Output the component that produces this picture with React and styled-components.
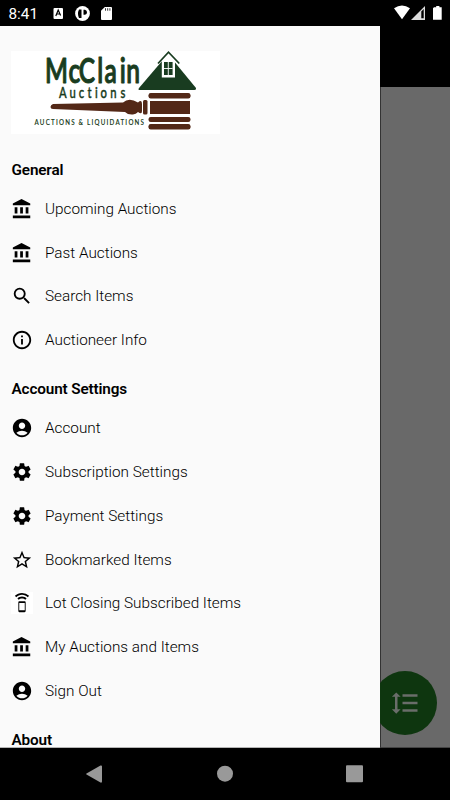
import React from "react";
import styled, { createGlobalStyle } from "styled-components";
import {
  MdAccountCircle,
  MdFormatLineSpacing,
  MdInfoOutline,
  MdSearch,
  MdSettings,
  MdSpeakerPhone,
  MdStarBorder,
} from "react-icons/md";

const GlobalStyle = createGlobalStyle`
  * {
    box-sizing: border-box;
  }
  body {
    margin: 0;
    background: #000;
    font-family: Roboto, "Liberation Sans", sans-serif;
  }
`;

const Phone = styled.div`
  width: 450px;
  height: 800px;
  display: flex;
  flex-direction: column;
  overflow: hidden;
  background: #000;
`;

const StatusBar = styled.header`
  height: 26px;
  flex: none;
  display: flex;
  justify-content: space-between;
  color: #fff;
`;

const StatusGroup = styled.div`
  display: flex;
  align-items: center;
`;

const Clock = styled.span`
  width: 44px;
  padding: 1px 0 0 8.5px;
  font-size: 15.3px;
  line-height: 26px;
  white-space: nowrap;
`;

const Body = styled.div`
  height: 722px;
  flex: none;
  display: flex;
`;

const Drawer = styled.nav`
  width: 380px;
  flex: none;
  padding: 25px 11px 0;
  overflow: hidden;
  background: #fafafa;
  border-bottom: 1px solid #b4b4b4;
  position: relative;
  z-index: 1;
`;

const Logo = styled.svg`
  display: block;
  width: 209px;
  height: 83px;
  margin-bottom: 8.7px;
  overflow: visible;
`;

const SectionTitle = styled.h2`
  height: 44.1px;
  margin: 0;
  padding: 11.5px 0 0 0.5px;
  font-size: 15.3px;
  font-weight: 600;
  line-height: 32px;
  letter-spacing: -0.14px;
  color: #000;
`;

const MenuList = styled.ul`
  list-style: none;
  margin: 0;
  padding: 0;
`;

const MenuItem = styled.li`
  height: 43.8px;
  padding-top: 0.4px;
  display: flex;
  align-items: center;
  gap: 12px;
  font-size: 15.3px;
  font-weight: 300;
  line-height: 20px;
  color: #000;
`;

const IconBox = styled.span`
  width: 22px;
  height: 22px;
  display: flex;
  font-size: 22px;
  background: ${(props) => (props.$white ? "#fff" : "transparent")};
`;

const Backdrop = styled.main`
  flex: 1;
  display: flex;
  flex-direction: column;
  justify-content: space-between;
  background: #696969;
  border-left: 1px solid #333;
  border-bottom: 1px solid #444;
`;

const Toolbar = styled.div`
  height: 61px;
  margin-left: -1px;
  background: #000;
`;

const Fab = styled.button`
  width: 64px;
  height: 64px;
  margin: 0 0 12px -8px;
  padding: 0;
  border: 0;
  border-radius: 50%;
  display: flex;
  align-items: center;
  justify-content: center;
  font-size: 30px;
  color: #6a6d6a;
  background: #0e360f;
`;

const NavBar = styled.footer`
  height: 52px;
  flex: none;
  display: flex;
  justify-content: space-between;
  align-items: center;
  padding: 0 86px 0 85px;
`;

const BankIcon = () => (
  <svg width="1em" height="1em" viewBox="0 0 24 24" fill="currentColor">
    <path d="M4 10v7h3v-7H4zm6 0v7h3v-7h-3zM2 22h19v-3H2v3zm14-12v7h3v-7h-3zM11.5 1L2 6v2h19V6l-9.5-5z" />
  </svg>
);

const sections = [
  {
    title: "General",
    items: [
      { label: "Upcoming Auctions", icon: BankIcon },
      { label: "Past Auctions", icon: BankIcon },
      { label: "Search Items", icon: MdSearch },
      { label: "Auctioneer Info", icon: MdInfoOutline },
    ],
  },
  {
    title: "Account Settings",
    items: [
      { label: "Account", icon: MdAccountCircle },
      { label: "Subscription Settings", icon: MdSettings },
      { label: "Payment Settings", icon: MdSettings },
      { label: "Bookmarked Items", icon: MdStarBorder },
      { label: "Lot Closing Subscribed Items", icon: MdSpeakerPhone, white: true },
      { label: "My Auctions and Items", icon: BankIcon },
      { label: "Sign Out", icon: MdAccountCircle },
    ],
  },
  { title: "About", items: [] },
];

const LogoImage = () => (
  <Logo viewBox="0 0 209 83">
    <rect width="209" height="83" fill="#fff" />
    <g
      fill="#193c20"
      stroke="#193c20"
      strokeLinejoin="round"
      fontFamily="Lato, sans-serif"
    >
      <text transform="translate(34 32) scale(0.72 1)" fontSize="34" fontWeight="600" strokeWidth="1" x="0 32.5 47 72.5 82.5 104 113">
        McClain
      </text>
      <text transform="translate(48 47) scale(0.75 1)" fontSize="15" fontWeight="500" strokeWidth="0.4" x="0 14 26.5 38 48 55.500 68.500 82">
        Auctions
      </text>
      <text transform="translate(23.5 74) scale(0.75 1)" fontSize="8.3" fontWeight="600" strokeWidth="0.1" textLength="146">
        AUCTIONS &amp; LIQUIDATIONS
      </text>
    </g>
    {/* house roof and dormer */}
    <path d="M157 3L185 37Q185.5 39 183.5 39H129Q126.5 39 128 37Z" fill="#193c20" />
    <path d="M150.8 26.5V10L147 11.5 157.5 1 168 11.5 164 10v16.5z" fill="#fff" />
    <path d="M147 12.5L157.5 1.2 168.3 12.5" fill="none" stroke="#193c20" strokeWidth="1.7" />
    <path d="M153 11h8.6v13H153z" fill="#193c20" />
    <path d="M157.3 11v13M153 17.5h8.6" stroke="#fff" strokeWidth="0.9" />
    {/* gavel */}
    <g fill="#532817">
      <rect x="137.5" y="42" width="42" height="5.5" rx="2.2" />
      <rect x="139" y="50" width="40" height="13" />
      <rect x="137.5" y="66" width="42" height="5" rx="2.2" />
      <rect x="137.5" y="73" width="42" height="5.5" rx="2.2" />
      <rect x="132" y="49" width="4.5" height="14.5" rx="1.5" />
      <path d="M42 53Q39.5 54 39.5 56T42 58L114 61Q117 64 122 63.5 125 63 127 61 131 64 131 60V53Q131 48 127 51.5 118 46 112 51.5Z" />
    </g>
  </Logo>
);

const App = () => {
  return (
    <>
      <GlobalStyle />
      <Phone>
        <StatusBar>
          <StatusGroup>
            <Clock>8:41</Clock>
            <svg width="72" height="26" viewBox="0 0 72 26" fill="#fff">
              <rect x="9.5" y="8" width="9.5" height="11" rx="1" />
              <path d="M11.8 16L14.2 10l2.4 5.5M12.7 14h3" fill="none" stroke="#000" strokeWidth="1.2" />
              <circle cx="38.5" cy="13.5" r="7.4" />
              <path d="M35 9.5Q33 13.5 35 18h2.5V9.5zM39.5 9.8h1.5q2 .5 2 2.5t-2 2.5h-1.5z" fill="#000" />
              <path d="M60.8 7H67q1 0 1 1v11q0 1-1 1h-9q-1 0-1-1v-8.2z" />
              <path d="M61.5 8.2v2.5M63.7 8.2v2.5M65.9 8.2v2.5" stroke="#333" strokeWidth="1" />
            </svg>
          </StatusGroup>
          <svg width="60" height="26" viewBox="0 0 60 26" fill="#fff">
            <path d="M4 8.2Q12 3 20 8.2L12 19.2z" />
            <path d="M35 6v14H21z" fill="#ddd" />
            <path d="M31.3 11.5L33.7 9v9.3h-2.4z" fill="#000" />
            <path d="M44 7.2h2.2V6h3.2v1.2h2.3v12.6H43V8.2z" />
          </svg>
        </StatusBar>
        <Body>
          <Drawer>
            <LogoImage />
            {sections.map((section) => (
              <section key={section.title}>
                <SectionTitle>{section.title}</SectionTitle>
                <MenuList>
                  {section.items.map(({ label, icon: Icon, white }) => (
                    <MenuItem key={label}>
                      <IconBox $white={white}>
                        <Icon />
                      </IconBox>
                      {label}
                    </MenuItem>
                  ))}
                </MenuList>
              </section>
            ))}
          </Drawer>
          <Backdrop>
            <Toolbar />
            <Fab aria-label="Line spacing">
              <MdFormatLineSpacing />
            </Fab>
          </Backdrop>
        </Body>
        <NavBar>
          <svg width="18" height="20" viewBox="0 0 18 20">
            <path d="M1.5 9.5L15.5 1.5Q17 1 17 2.5v15Q17 19 15.5 18.5L1.5 10.5Q.6 10 1.5 9.5z" fill="#999" />
          </svg>
          <svg width="18" height="18" viewBox="0 0 18 18">
            <circle cx="9" cy="8.7" r="8" fill="#999" />
          </svg>
          <svg width="18" height="18" viewBox="0 0 18 18">
            <rect x="0" y="0.3" width="17" height="17" rx="1" fill="#999" />
          </svg>
        </NavBar>
      </Phone>
    </>
  );
};

export default App;
